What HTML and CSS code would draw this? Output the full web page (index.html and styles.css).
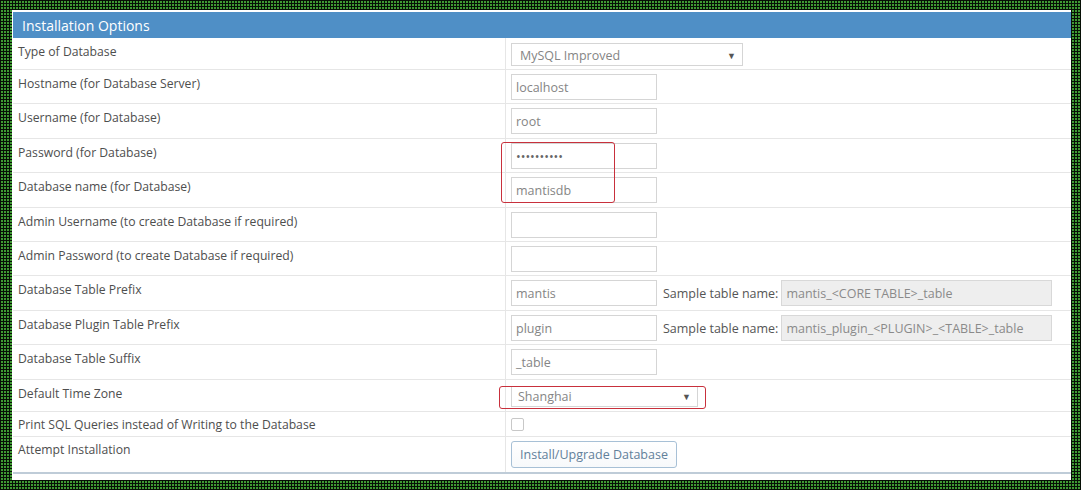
FILE: index.html
```html
<!DOCTYPE html>
<html>
<head>
<meta charset="utf-8">
<link rel="stylesheet" href="styles.css">
</head>
<body>
<div class="frame">
  <div class="panel">
    <div class="head">Installation Options</div>
    <div class="rows">
      <div class="row h32">
        <div class="lbl">Type of Database</div>
        <div class="val pt5"><div class="select s-db"><span>MySQL Improved</span><span class="arrow">▼</span></div></div>
      </div>
      <div class="row std">
        <div class="lbl">Hostname (for Database Server)</div>
        <div class="val"><div class="input">localhost</div></div>
      </div>
      <div class="row std">
        <div class="lbl">Username (for Database)</div>
        <div class="val"><div class="input">root</div></div>
      </div>
      <div class="row std">
        <div class="lbl">Password (for Database)</div>
        <div class="val"><div class="input pw">••••••••••</div></div>
      </div>
      <div class="row std">
        <div class="lbl">Database name (for Database)</div>
        <div class="val"><div class="input">mantisdb</div></div>
      </div>
      <div class="row std">
        <div class="lbl">Admin Username (to create Database if required)</div>
        <div class="val"><div class="input"></div></div>
      </div>
      <div class="row std">
        <div class="lbl">Admin Password (to create Database if required)</div>
        <div class="val"><div class="input"></div></div>
      </div>
      <div class="row std">
        <div class="lbl">Database Table Prefix</div>
        <div class="val"><div class="input">mantis</div><span class="sample-lbl">Sample table name:</span><div class="input ro">mantis_&lt;CORE TABLE&gt;_table</div></div>
      </div>
      <div class="row std">
        <div class="lbl">Database Plugin Table Prefix</div>
        <div class="val"><div class="input">plugin</div><span class="sample-lbl">Sample table name:</span><div class="input ro">mantis_plugin_&lt;PLUGIN&gt;_&lt;TABLE&gt;_table</div></div>
      </div>
      <div class="row std">
        <div class="lbl">Database Table Suffix</div>
        <div class="val"><div class="input">_table</div></div>
      </div>
      <div class="row h32">
        <div class="lbl">Default Time Zone</div>
        <div class="val pt6"><div class="select s-tz"><span>Shanghai</span><span class="arrow">▼</span></div></div>
      </div>
      <div class="row h25">
        <div class="lbl pt5">Print SQL Queries instead of Writing to the Database</div>
        <div class="val pt5"><div class="checkbox"></div></div>
      </div>
      <div class="row h35 last">
        <div class="lbl pt5">Attempt Installation</div>
        <div class="val"><div class="button">Install/Upgrade Database</div></div>
      </div>
    </div>
  </div>
  <div class="mark mark1"></div>
  <div class="mark mark2"></div>
</div>
</body>
</html>
```

FILE: styles.css
```css
html, body {
  margin: 0;
  padding: 0;
}
body {
  width: 1081px;
  height: 490px;
  overflow: hidden;
  background-color: #3f9a33;
  background-image:
    linear-gradient(90deg, #071006 1px, transparent 1px),
    linear-gradient(#071006 1px, transparent 1px);
  background-size: 3px 3px;
  font-family: "Open Sans", "Noto Sans", sans-serif;
}
.frame {
  position: relative;
  padding: 10px 10px 10px 12px;
  box-sizing: border-box;
  height: 490px;
}
.panel {
  background: #fff;
  height: 470px;
  box-sizing: border-box;
  padding: 2px 0 6px 1px;
  display: flex;
  flex-direction: column;
}
.head {
  height: 26px;
  box-sizing: border-box;
  background: #4f8fc6;
  color: #fff;
  font-size: 14px;
  line-height: 26px;
  padding: 1px 0 0 9px;
}
.rows {
  flex: 1;
  display: flex;
  flex-direction: column;
  border-bottom: 2px solid #bfccd8;
}
.row {
  display: grid;
  grid-template-columns: 493px 1fr;
  border-bottom: 1px solid #e6e6e6;
  box-sizing: border-box;
}
.row.last {
  border-bottom: 0;
  flex: 1;
}
.h32 { height: 32px; }
.std { height: 34.4px; }
.h25 { height: 25px; }
.h35 { height: 35px; }
.lbl {
  border-right: 1px solid #e6e6e6;
  padding: 6px 5px 0;
  font-size: 12.2px;
  line-height: 16px;
  color: #4e4e4e;
}
.val {
  padding: 4px 5px 0;
  display: flex;
  align-items: flex-start;
  font-size: 12.5px;
}
.val.pt5 { padding-top: 5px; }
.val.pt6 { padding-top: 6px; }
.lbl.pt5 { padding-top: 5px; }
.input {
  box-sizing: border-box;
  width: 146px;
  height: 26px;
  border: 1px solid #d5d5d5;
  background: #fff;
  color: #858585;
  padding: 1px 4px 0;
  line-height: 24px;
  white-space: nowrap;
}
.input.pw {
  color: #666;
}
.input.ro {
  width: 271px;
  background: #eeeeee;
  color: #8a8a8a;
  border-color: #d8d8d8;
}
.sample-lbl {
  line-height: 27px;
  margin: 0 3px 0 6px;
  color: #555;
  white-space: nowrap;
}
.select {
  box-sizing: border-box;
  border: 1px solid #d5d5d5;
  background: #fff;
  color: #858585;
  display: flex;
  justify-content: space-between;
  align-items: center;
  padding: 1px 6px 0 8px;
}
.s-db {
  width: 232px;
  height: 23px;
}
.s-tz {
  width: 187px;
  height: 21px;
  padding-left: 6px;
}
.arrow {
  font-size: 9px;
  color: #555;
}
.checkbox {
  width: 13px;
  height: 13px;
  box-sizing: border-box;
  border: 1px solid #c8c8c8;
  border-radius: 2px;
  background: #fff;
  margin-top: 1px;
}
.button {
  box-sizing: border-box;
  width: 166px;
  height: 27px;
  border: 1px solid #a7c0d6;
  border-radius: 3px;
  background: linear-gradient(#ffffff, #f7f9fb);
  color: #62809a;
  text-align: center;
  line-height: 25px;
}
.mark {
  position: absolute;
  border: 1px solid #c8303c;
  border-radius: 3px;
  box-sizing: border-box;
}
.mark1 {
  left: 501px;
  top: 142px;
  width: 114px;
  height: 61px;
}
.mark2 {
  left: 499px;
  top: 386px;
  width: 207px;
  height: 23px;
}
```
